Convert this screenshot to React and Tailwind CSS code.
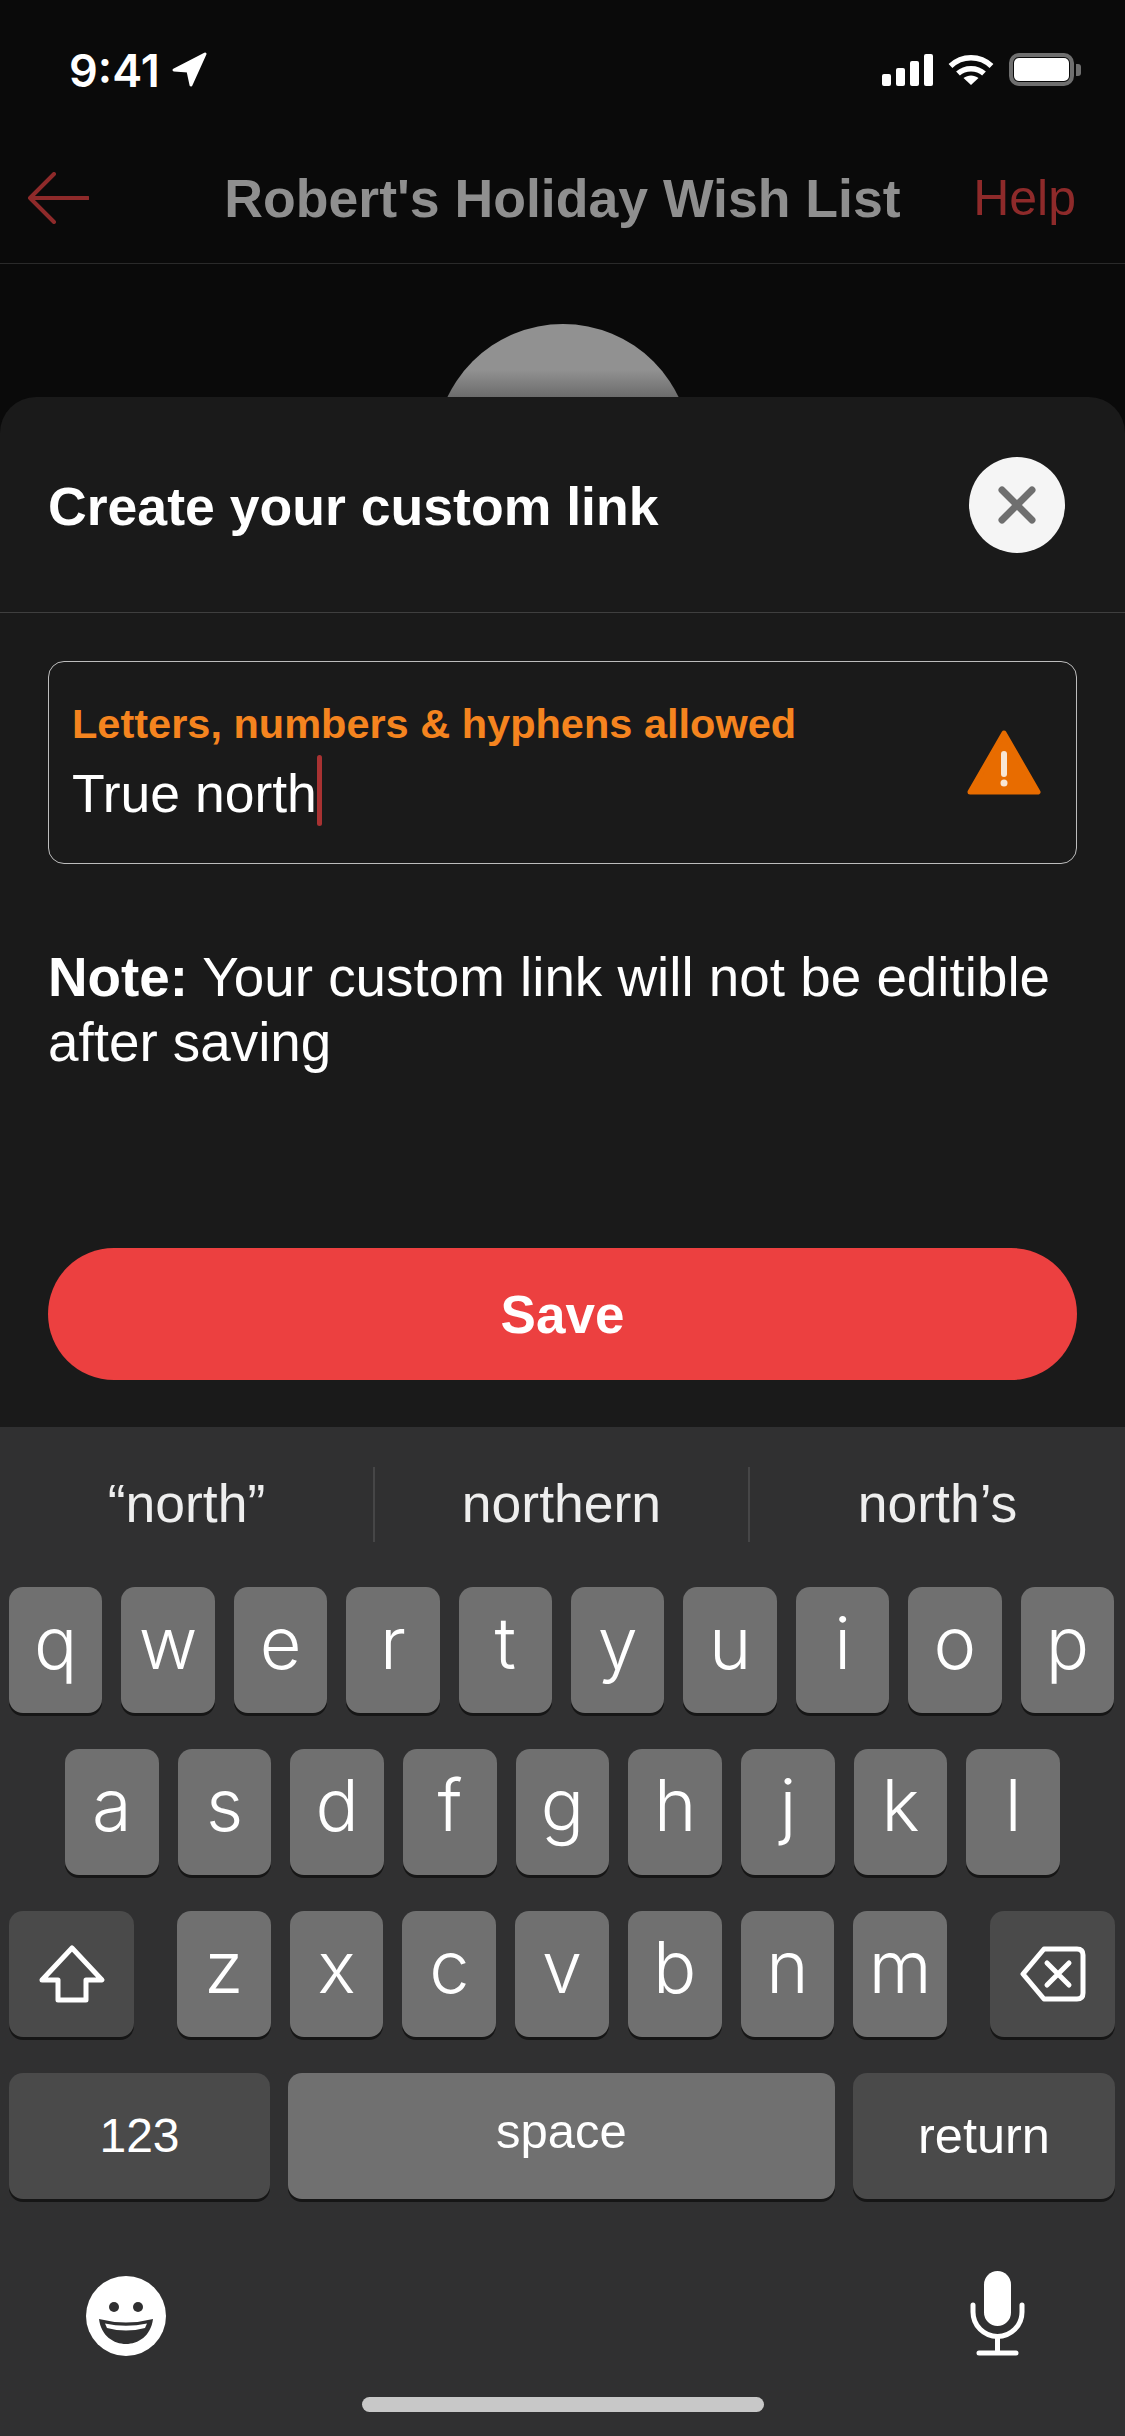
const ROW_1 = ['q', 'w', 'e', 'r', 't', 'y', 'u', 'i', 'o', 'p']
const ROW_2 = ['a', 's', 'd', 'f', 'g', 'h', 'j', 'k', 'l']
const ROW_3 = ['z', 'x', 'c', 'v', 'b', 'n', 'm']

function LetterKey({ letter }) {
  return (
    <div className="flex-1 h-[126px] rounded-[14px] bg-[#707070] shadow-[0_3px_0_#161616] flex items-center justify-center pb-[14px] font-['Inter'] font-light text-[72px] leading-none text-white">
      {letter}
    </div>
  )
}

function StatusBar() {
  return (
    <div className="h-[133px] flex items-start justify-between pt-[53px] pl-[69px] pr-[44px]">
      <div className="flex items-center gap-[12px] h-[34px]">
        <span className="font-['Inter'] font-semibold text-[45px] leading-none text-white">9:41</span>
        <svg width="36" height="36" viewBox="0 0 36 36" fill="white" stroke="white" strokeWidth="3" strokeLinejoin="round">
          <path d="M2 18 L33 2 L19 33 L16 19 Z" />
        </svg>
      </div>
      <div className="flex items-center gap-[15px]">
        <div className="flex items-end gap-[5px] h-[32px]">
          <div className="w-[9px] h-[12px] rounded-[2px] bg-white" />
          <div className="w-[9px] h-[18px] rounded-[2px] bg-white" />
          <div className="w-[9px] h-[25px] rounded-[2px] bg-white" />
          <div className="w-[9px] h-[32px] rounded-[2px] bg-white" />
        </div>
        <svg width="46" height="32" viewBox="0 0 46 32" fill="none" stroke="white" strokeWidth="5.5">
          <path d="M2.5 12 C14 1 32 1 43.5 12" />
          <path d="M10 19.5 C17 13 29 13 36 19.5" />
          <path d="M23 31 L15.5 24 C20 20.5 26 20.5 30.5 24 Z" fill="white" stroke="none" />
        </svg>
        <div className="flex items-center gap-[2px]">
          <div className="w-[65px] h-[33px] rounded-[10px] border-[4px] border-[#6f6f6f] p-[1px]">
            <div className="w-full h-full rounded-[5px] bg-white" />
          </div>
          <div className="w-[5px] h-[12px] rounded-r-[3px] bg-[#6f6f6f]" />
        </div>
      </div>
    </div>
  )
}

function Header() {
  return (
    <div className="h-[131px] border-b border-[#2a2a2a] grid grid-cols-[1fr_auto_1fr] items-center">
      <svg className="ml-[27px]" width="62" height="52" viewBox="0 0 62 52" fill="none" stroke="#8e2a2a" strokeWidth="4" strokeLinecap="round" strokeLinejoin="round">
        <path d="M61 26 H3 M27 2 L3 26 L27 50" />
      </svg>
      <div className="pt-[2px] font-bold text-[53.6px] leading-none text-[#8f8f8f]">Robert's Holiday Wish List</div>
      <div className="justify-self-end pr-[49px] text-[50px] leading-none text-[#8e2a2a]">Help</div>
    </div>
  )
}

function Sheet() {
  return (
    <div className="h-[1030px] rounded-t-[36px] bg-[#1a1a1a] flex flex-col">
      <div className="h-[216px] shrink-0 border-b border-[#3f3f3f] flex items-center justify-between pl-[48px] pr-[60px]">
        <div className="pt-[4px] font-bold text-[53.6px] leading-none text-white">Create your custom link</div>
        <div className="w-[96px] h-[96px] rounded-full bg-[#f5f5f5] flex items-center justify-center">
          <svg width="40" height="40" viewBox="0 0 40 40" stroke="#6f6f6f" strokeWidth="7" strokeLinecap="round">
            <path d="M5 5 L35 35 M35 5 L5 35" />
          </svg>
        </div>
      </div>
      <div className="flex-1 flex flex-col px-[48px] pt-[48px] pb-[47px]">
        <div className="h-[203px] rounded-[16px] border border-[#bdbdbd] flex items-center justify-between pl-[23px] pr-[35px]">
          <div className="flex flex-col pt-[3px]">
            <div className="font-bold text-[41.5px] leading-[44px] text-[#f5841f]">Letters, numbers &amp; hyphens allowed</div>
            <div className="flex items-center h-[71px] mt-[9px]">
              <span className="pt-[6px] text-[53.5px] leading-none text-white">True north</span>
              <span className="w-[5px] h-[71px] rounded-full bg-[#a83232]" />
            </div>
          </div>
          <svg width="74" height="66" viewBox="0 0 74 66">
            <path d="M37 3 L71 62 H3 Z" fill="#e86c00" stroke="#e86c00" strokeWidth="5" strokeLinejoin="round" />
            <path d="M37 24 V44" stroke="#f8e6d4" strokeWidth="6" strokeLinecap="round" />
            <circle cx="37" cy="53" r="3.5" fill="#f8e6d4" />
          </svg>
        </div>
        <p className="mt-[81px] text-[54.8px] leading-[65px] text-white">
          <span className="font-bold">Note:</span> Your custom link will not be editible after saving
        </p>
        <div className="mt-auto h-[132px] rounded-full bg-[#ec4040] flex items-center justify-center font-bold text-[53px] leading-none text-white">
          Save
        </div>
      </div>
    </div>
  )
}

function Keyboard() {
  return (
    <div className="flex-1 bg-[#303031]">
      <div className="h-[160px] flex items-center pb-[6px] text-[53.5px] leading-none text-[#eeeeee]">
        <div className="w-[373px] text-center">“north”</div>
        <div className="w-[2px] h-[75px] bg-[#464647]" />
        <div className="w-[373px] text-center">northern</div>
        <div className="w-[2px] h-[75px] bg-[#464647]" />
        <div className="flex-1 text-center">north’s</div>
      </div>

      <div className="flex flex-col gap-[36px]">
        <div className="flex gap-[19px] pl-[9px] pr-[11px]">
          {ROW_1.map((l) => <LetterKey key={l} letter={l} />)}
        </div>
        <div className="flex gap-[19px] pl-[65px] pr-[65px]">
          {ROW_2.map((l) => <LetterKey key={l} letter={l} />)}
        </div>
        <div className="flex pl-[9px] pr-[10px]">
          <div className="w-[125px] h-[126px] rounded-[14px] bg-[#4a4a4a] shadow-[0_3px_0_#161616] flex items-center justify-center">
            <svg width="72" height="62" viewBox="0 0 72 62" fill="none" stroke="white" strokeWidth="5" strokeLinejoin="round">
              <path d="M36 5 L66 37 H50 V57 H22 V37 H6 Z" />
            </svg>
          </div>
          <div className="flex-1 flex gap-[19px] mx-[43px]">
            {ROW_3.map((l) => <LetterKey key={l} letter={l} />)}
          </div>
          <div className="w-[125px] h-[126px] rounded-[14px] bg-[#4a4a4a] shadow-[0_3px_0_#161616] flex items-center justify-center">
            <svg width="66" height="56" viewBox="0 0 66 56" fill="none" stroke="white" strokeWidth="5" strokeLinecap="round" strokeLinejoin="round">
              <path d="M24 3 H57 Q63 3 63 9 V47 Q63 53 57 53 H24 L3 28 Z" />
              <path d="M27 17 L49 39 M49 17 L27 39" />
            </svg>
          </div>
        </div>
        <div className="flex pl-[9px] pr-[10px] gap-[18px]">
          <div className="w-[261px] h-[126px] rounded-[14px] bg-[#4a4a4a] shadow-[0_3px_0_#161616] flex items-center justify-center text-[48px] leading-none text-white">123</div>
          <div className="flex-1 h-[126px] rounded-[14px] bg-[#707070] shadow-[0_3px_0_#161616] flex items-center justify-center pb-[10px] text-[49px] leading-none text-white">space</div>
          <div className="w-[262px] h-[126px] rounded-[14px] bg-[#4a4a4a] shadow-[0_3px_0_#161616] flex items-center justify-center text-[50.5px] leading-none text-white">return</div>
        </div>
      </div>

      <div className="mt-[69px] h-[90px] flex items-start justify-between pl-[86px] pr-[97px]">
        <svg className="mt-[8px]" width="80" height="80" viewBox="0 0 80 80">
          <circle cx="40" cy="40" r="40" fill="white" />
          <circle cx="28" cy="31" r="5" fill="#303031" />
          <circle cx="52" cy="31" r="5" fill="#303031" />
          <path d="M13 43 Q40 50 67 43 C65 60 52 68 40 68 C28 68 15 60 13 43 Z" fill="#303031" />
          <path d="M19 47.5 Q40 52 61 47.5 L59 52 Q40 57 21 52 Z" fill="white" />
        </svg>
        <svg width="60" height="90" viewBox="0 0 60 90" fill="none" stroke="white" strokeWidth="5" strokeLinecap="round">
          <rect x="16" y="3" width="27" height="55" rx="13.5" fill="white" stroke="none" />
          <path d="M5 37 V44 A24.5 24.5 0 0 0 54 44 V37" />
          <path d="M29.5 69 V85 M11 85 H48" />
        </svg>
      </div>

      <div className="mt-[39px] mx-auto w-[402px] h-[15px] rounded-full bg-[#c8c8c8]" />
    </div>
  )
}

export default function App() {
  return (
    <div className="w-[1125px] h-[2436px] overflow-hidden flex flex-col bg-[#0a0a0a] font-['Liberation_Sans',sans-serif]">
      <StatusBar />
      <Header />
      <div className="h-[133px] shrink-0 overflow-hidden flex justify-center pt-[60px]">
        <div className="w-[256px] h-[256px] shrink-0 rounded-full bg-[linear-gradient(#919191_46px,#6c6c6c_73px)]" />
      </div>
      <Sheet />
      <Keyboard />
    </div>
  )
}
